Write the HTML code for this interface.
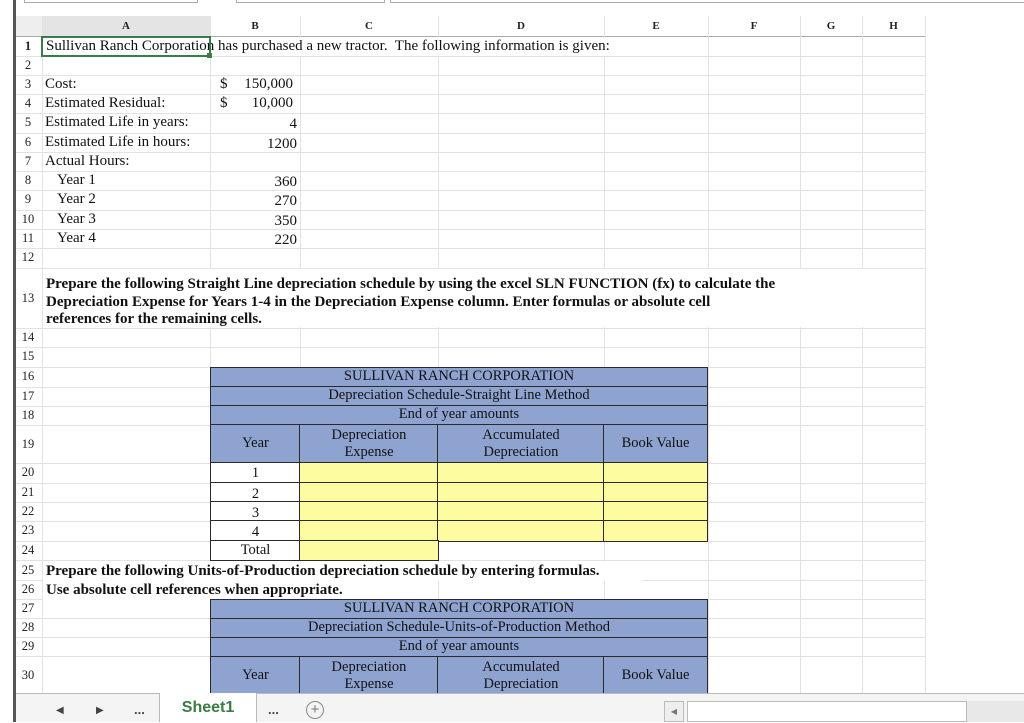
<!DOCTYPE html>
<html><head><meta charset="utf-8"><style>
*{margin:0;padding:0;box-sizing:border-box}
body{width:1024px;height:722px;overflow:hidden;background:#fff;position:relative;font-family:"Liberation Serif",serif;font-size:15px;color:#111}
div{position:absolute}
.h{height:1px;background:#e2e2e2;left:16px;width:909px}
.v{width:1px;background:#e2e2e2;top:16px;height:677px}
.rn{left:16px;width:24px;text-align:center;font-size:12.5px;color:#222}
.ch{top:16px;height:20px;line-height:20px;text-align:center;font-size:11px;font-weight:bold;color:#222}
.t{white-space:nowrap;line-height:19px}
.b{background:#8fa3d1;border:1.5px solid #2a2a2a;text-align:center;line-height:17px;white-space:nowrap;font-size:14.5px}
.y{background:#fdfca1;border:1.5px solid #2a2a2a}
.w{background:#fff;border:1.5px solid #2a2a2a;text-align:center;line-height:17px;font-size:14.5px}
.bold{font-weight:bold}
</style></head><body>
<div style="left:24px;top:0;width:174px;height:3px;border:1px solid #aaa;border-top:none"></div>
<div style="left:236px;top:0;width:149px;height:3px;border:1px solid #aaa;border-top:none"></div>
<div style="left:390px;top:0;width:634px;height:3px;border:1px solid #aaa;border-top:none;border-right:none"></div>
<div style="left:13px;top:0;width:3px;height:722px;background:#555"></div>

<div style="left:16px;top:16px;width:26px;height:20px;background:#eee"></div>
<div style="left:42px;top:16px;width:168px;height:20px;background:#e4e4e4"></div>
<div class="h" style="top:36px;background:#aaa"></div>
<div class="ch" style="left:42px;width:168px">A</div>
<div class="ch" style="left:210px;width:90px">B</div>
<div class="ch" style="left:300px;width:138px">C</div>
<div class="ch" style="left:438px;width:166px">D</div>
<div class="ch" style="left:604px;width:104px">E</div>
<div class="ch" style="left:708px;width:92px">F</div>
<div class="ch" style="left:800px;width:62px">G</div>
<div class="ch" style="left:862px;width:63px">H</div>

<div class="v" style="left:42px"></div>
<div class="v" style="left:210px"></div>
<div class="v" style="left:300px"></div>
<div class="v" style="left:438px"></div>
<div class="v" style="left:604px"></div>
<div class="v" style="left:708px"></div>
<div class="v" style="left:800px"></div>
<div class="v" style="left:862px"></div>
<div class="v" style="left:925px"></div>

<div class="h" style="top:56px"></div><div class="h" style="top:75px"></div><div class="h" style="top:94px"></div><div class="h" style="top:113px"></div><div class="h" style="top:133px"></div><div class="h" style="top:152px"></div><div class="h" style="top:171px"></div><div class="h" style="top:190px"></div><div class="h" style="top:210px"></div><div class="h" style="top:229px"></div><div class="h" style="top:248px"></div><div class="h" style="top:268px"></div><div class="h" style="top:328px"></div><div class="h" style="top:347px"></div><div class="h" style="top:367px"></div><div class="h" style="top:387px"></div><div class="h" style="top:406px"></div><div class="h" style="top:425px"></div><div class="h" style="top:463px"></div><div class="h" style="top:483px"></div><div class="h" style="top:502px"></div><div class="h" style="top:521px"></div><div class="h" style="top:541px"></div><div class="h" style="top:560px"></div><div class="h" style="top:580px"></div><div class="h" style="top:599px"></div><div class="h" style="top:618px"></div><div class="h" style="top:637px"></div><div class="h" style="top:656px"></div>

<div class="rn bold" style="top:37px;line-height:19px">1</div>
<div class="rn" style="top:56px;line-height:19px">2</div>
<div class="rn" style="top:75px;line-height:19px">3</div>
<div class="rn" style="top:94px;line-height:19px">4</div>
<div class="rn" style="top:113px;line-height:19px">5</div>
<div class="rn" style="top:133px;line-height:19px">6</div>
<div class="rn" style="top:152px;line-height:19px">7</div>
<div class="rn" style="top:171px;line-height:19px">8</div>
<div class="rn" style="top:190px;line-height:19px">9</div>
<div class="rn" style="top:210px;line-height:19px">10</div>
<div class="rn" style="top:229px;line-height:19px">11</div>
<div class="rn" style="top:248px;line-height:19px">12</div>
<div class="rn" style="top:268px;line-height:60px">13</div>
<div class="rn" style="top:328px;line-height:19px">14</div>
<div class="rn" style="top:347px;line-height:19px">15</div>
<div class="rn" style="top:367px;line-height:19px">16</div>
<div class="rn" style="top:387px;line-height:19px">17</div>
<div class="rn" style="top:406px;line-height:19px">18</div>
<div class="rn" style="top:425px;line-height:38px">19</div>
<div class="rn" style="top:463px;line-height:19px">20</div>
<div class="rn" style="top:483px;line-height:19px">21</div>
<div class="rn" style="top:502px;line-height:19px">22</div>
<div class="rn" style="top:521px;line-height:19px">23</div>
<div class="rn" style="top:541px;line-height:19px">24</div>
<div class="rn" style="top:561px;line-height:19px">25</div>
<div class="rn" style="top:580px;line-height:19px">26</div>
<div class="rn" style="top:599px;line-height:19px">27</div>
<div class="rn" style="top:618px;line-height:19px">28</div>
<div class="rn" style="top:637px;line-height:19px">29</div>
<div class="rn" style="top:656px;line-height:38px">30</div>

<div class="t" style="left:43px;top:37px;background:#fff;padding-left:3px;width:660px">Sullivan Ranch Corporation has purchased a new tractor.&nbsp; The following information is given:</div>
<div style="left:41px;top:36px;width:170px;height:21px;border:2px solid #3c7a4c"></div>
<div style="left:207px;top:53px;width:5px;height:5px;background:#3c7a4c"></div>

<div class="t" style="left:45px;top:75px">Cost:</div>
<div class="t" style="left:220px;top:75px">$</div><div class="t" style="left:230px;top:75px;width:63px;text-align:right">150,000</div>
<div class="t" style="left:45px;top:94px">Estimated Residual:</div>
<div class="t" style="left:220px;top:94px">$</div><div class="t" style="left:230px;top:94px;width:63px;text-align:right">10,000</div>
<div class="t" style="left:45px;top:113px">Estimated Life in years:</div>
<div class="t" style="left:230px;top:115px;width:67px;text-align:right">4</div>
<div class="t" style="left:45px;top:133px">Estimated Life in hours:</div>
<div class="t" style="left:230px;top:135px;width:67px;text-align:right">1200</div>
<div class="t" style="left:45px;top:152px">Actual Hours:</div>
<div class="t" style="left:57px;top:171px">Year 1</div><div class="t" style="left:230px;top:173px;width:67px;text-align:right">360</div>
<div class="t" style="left:57px;top:190px">Year 2</div><div class="t" style="left:230px;top:192px;width:67px;text-align:right">270</div>
<div class="t" style="left:57px;top:210px">Year 3</div><div class="t" style="left:230px;top:212px;width:67px;text-align:right">350</div>
<div class="t" style="left:57px;top:229px">Year 4</div><div class="t" style="left:230px;top:231px;width:67px;text-align:right">220</div>

<div class="bold" style="left:43px;top:269px;width:860px;height:58px;background:#fff;padding:7px 0 0 3px;line-height:17.5px">Prepare the following Straight Line depreciation schedule by using the excel SLN FUNCTION (fx) to calculate the<br>Depreciation Expense for Years 1-4 in the Depreciation Expense column. Enter formulas or absolute cell<br>references for the remaining cells.</div>

<div class="b" style="left:210px;top:367px;width:498px;height:21px">SULLIVAN RANCH CORPORATION</div>
<div class="b" style="left:210px;top:386px;width:498px;height:21px">Depreciation Schedule-Straight Line Method</div>
<div class="b" style="left:210px;top:405px;width:498px;height:21px">End of year amounts</div>
<div class="b" style="left:210px;top:424px;width:91px;height:40px;line-height:37px">Year</div>
<div class="b" style="left:299px;top:424px;width:140px;height:40px;padding-top:2px">Depreciation<br>Expense</div>
<div class="b" style="left:437px;top:424px;width:168px;height:40px;padding-top:2px">Accumulated<br>Depreciation</div>
<div class="b" style="left:603px;top:424px;width:105px;height:40px;line-height:37px">Book Value</div>
<div class="w" style="left:210px;top:462px;width:91px;height:22px;padding-top:2px">1</div>
<div class="w" style="left:210px;top:482px;width:91px;height:21px;padding-top:3px">2</div>
<div class="w" style="left:210px;top:501px;width:91px;height:21px;padding-top:3px">3</div>
<div class="w" style="left:210px;top:520px;width:91px;height:22px;padding-top:3px">4</div>
<div class="w" style="left:210px;top:540px;width:91px;height:21px;padding-top:1px">Total</div>
<div class="y" style="left:299px;top:462px;width:140px;height:22px"></div><div class="y" style="left:437px;top:462px;width:168px;height:22px"></div><div class="y" style="left:603px;top:462px;width:105px;height:22px"></div>
<div class="y" style="left:299px;top:482px;width:140px;height:21px"></div><div class="y" style="left:437px;top:482px;width:168px;height:21px"></div><div class="y" style="left:603px;top:482px;width:105px;height:21px"></div>
<div class="y" style="left:299px;top:501px;width:140px;height:21px"></div><div class="y" style="left:437px;top:501px;width:168px;height:21px"></div><div class="y" style="left:603px;top:501px;width:105px;height:21px"></div>
<div class="y" style="left:299px;top:520px;width:140px;height:22px"></div><div class="y" style="left:437px;top:520px;width:168px;height:22px"></div><div class="y" style="left:603px;top:520px;width:105px;height:22px"></div>
<div class="y" style="left:299px;top:540px;width:140px;height:21px"></div>

<div class="t bold" style="left:43px;top:562px;padding-left:3px;background:#fff;width:600px">Prepare the following Units-of-Production depreciation schedule by entering formulas.</div>
<div class="t bold" style="left:43px;top:581px;padding-left:3px;background:#fff;width:320px">Use absolute cell references when appropriate.</div>

<div class="b" style="left:210px;top:599px;width:498px;height:21px">SULLIVAN RANCH CORPORATION</div>
<div class="b" style="left:210px;top:618px;width:498px;height:21px">Depreciation Schedule-Units-of-Production Method</div>
<div class="b" style="left:210px;top:637px;width:498px;height:21px">End of year amounts</div>
<div class="b" style="left:210px;top:656px;width:91px;height:40px;line-height:37px">Year</div>
<div class="b" style="left:299px;top:656px;width:140px;height:40px;padding-top:2px">Depreciation<br>Expense</div>
<div class="b" style="left:437px;top:656px;width:168px;height:40px;padding-top:2px">Accumulated<br>Depreciation</div>
<div class="b" style="left:603px;top:656px;width:105px;height:40px;line-height:37px">Book Value</div>

<div style="left:16px;top:693px;width:1008px;height:29px;background:#f4f4f4;border-top:1px solid #bbb"></div>
<div style="left:56px;top:705px;font-size:10px;color:#444">&#9664;</div>
<div style="left:96px;top:705px;font-size:10px;color:#444">&#9654;</div>
<div style="left:134px;top:702px;font-size:13px;font-weight:bold;color:#444;font-family:'Liberation Sans',sans-serif">...</div>
<div style="left:159px;top:693px;width:98px;height:29px;background:#fff;border-left:1px solid #bbb;border-right:1px solid #bbb;text-align:center;line-height:30px;font-family:'Liberation Sans',sans-serif;font-weight:bold;font-size:16px;color:#3a7a44">Sheet1</div>
<div style="left:268px;top:702px;font-size:13px;font-weight:bold;color:#444;font-family:'Liberation Sans',sans-serif">...</div>
<div style="left:306px;top:701px;width:18px;height:18px;border:1.5px solid #888;border-radius:50%;text-align:center;line-height:15px;font-size:15px;color:#777;font-family:'Liberation Sans',sans-serif">+</div>
<div style="left:664px;top:701px;width:20px;height:21px;background:#eee;border:1px solid #bbb;font-size:8px;color:#777;text-align:center;line-height:20px">&#9664;</div>
<div style="left:687px;top:701px;width:280px;height:21px;background:#fff;border:1px solid #bbb"></div>
<div style="left:967px;top:701px;width:57px;height:21px;background:#e8e8e8"></div>
</body></html>
